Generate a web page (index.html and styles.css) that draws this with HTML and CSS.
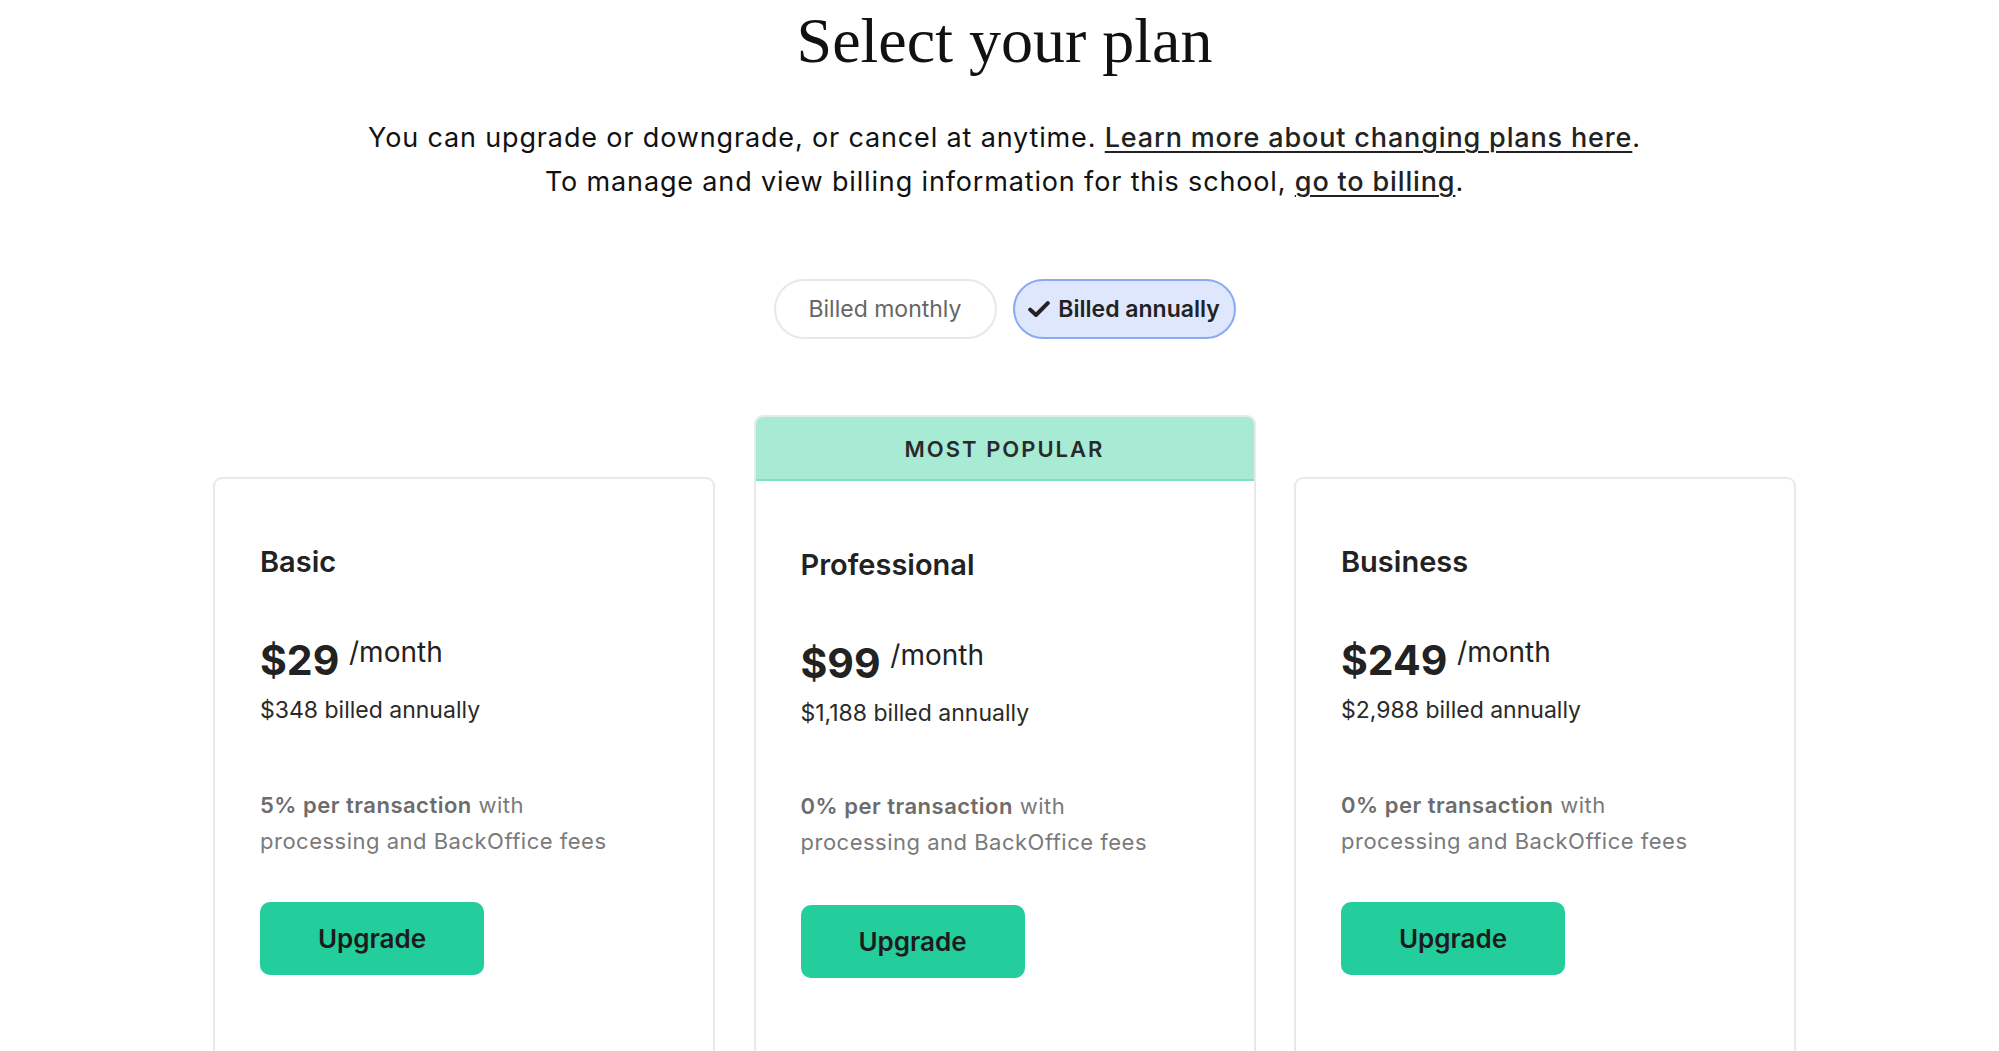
FILE: index.html
```html
<!DOCTYPE html>
<html lang="en">
<head>
<meta charset="utf-8">
<title>Select your plan</title>
<link rel="stylesheet" href="styles.css">
</head>
<body>
<main class="page">
  <h1 class="title">Select your plan</h1>
  <p class="intro">
    You can upgrade or downgrade, or cancel at anytime. <a href="#" class="link">Learn more about changing plans here</a>.<br>
    To manage and view billing information for this school, <a href="#" class="link">go to billing</a>.
  </p>

  <div class="toggle">
    <button class="pill">Billed monthly</button>
    <button class="pill pill-active">
      <svg class="check" viewBox="0 0 22 16" width="22" height="16" aria-hidden="true"><path d="M2.2 8.6 L8 14 L19.8 2.2" fill="none" stroke="#222" stroke-width="4" stroke-linecap="round" stroke-linejoin="round"/></svg>
      <span>Billed annually</span>
    </button>
  </div>

  <div class="plans">
    <section class="card">
      <div class="card-body">
        <h2 class="plan-name">Basic</h2>
        <div class="price"><span class="amount">$29</span> <span class="per">/month</span></div>
        <div class="billed">$348 billed annually</div>
        <p class="fee"><strong>5% per transaction</strong> with<br>processing and BackOffice fees</p>
        <button class="upgrade">Upgrade</button>
      </div>
    </section>

    <section class="card card-popular">
      <div class="banner">MOST POPULAR</div>
      <div class="card-body">
        <h2 class="plan-name">Professional</h2>
        <div class="price"><span class="amount">$99</span> <span class="per">/month</span></div>
        <div class="billed">$1,188 billed annually</div>
        <p class="fee"><strong>0% per transaction</strong> with<br>processing and BackOffice fees</p>
        <button class="upgrade">Upgrade</button>
      </div>
    </section>

    <section class="card">
      <div class="card-body">
        <h2 class="plan-name">Business</h2>
        <div class="price"><span class="amount">$249</span> <span class="per">/month</span></div>
        <div class="billed">$2,988 billed annually</div>
        <p class="fee"><strong>0% per transaction</strong> with<br>processing and BackOffice fees</p>
        <button class="upgrade">Upgrade</button>
      </div>
    </section>
  </div>
</main>
</body>
</html>
```

FILE: styles.css
```css
* { box-sizing: border-box; }

html, body {
  margin: 0;
  background: #ffffff;
}

body {
  font-family: Inter, "Noto Sans", "Liberation Sans", sans-serif;
  color: #1a1a1a;
  overflow: hidden;
}

.page {
  padding: 3px 0 0 10px;
  display: flex;
  flex-direction: column;
  align-items: center;
}

.title {
  margin: 0;
  font-family: "Liberation Serif", "Times New Roman", serif;
  font-weight: 400;
  font-size: 64px;
  line-height: 76px;
  color: #111;
  text-align: center;
}

.intro {
  margin: 37px 0 0;
  font-size: 27px;
  line-height: 44px;
  color: #111;
  text-align: center;
  letter-spacing: 0.85px;
}

.link {
  color: #222;
  font-weight: 500;
  text-decoration: underline;
  text-decoration-thickness: 2px;
  text-underline-offset: 4px;
}

.toggle {
  margin-top: 75px;
  display: flex;
  gap: 16px;
}

.pill {
  width: 223px;
  height: 60px;
  border-radius: 30px;
  border: 2px solid #e8e8e8;
  background: #fff;
  font-family: inherit;
  font-size: 23px;
  color: #666;
  display: flex;
  align-items: center;
  justify-content: center;
  gap: 8px;
  padding: 0;
}

.pill-active {
  background: #dfe7fd;
  border-color: #8aaaf3;
  color: #222;
  font-weight: 600;
}

.check { display: block; }

.plans {
  margin-top: 76px;
  display: flex;
  align-items: flex-start;
  gap: 38.5px;
}

.card {
  width: 502px;
  min-height: 720px;
  margin-top: 62px;
  border: 2px solid #e9e9e9;
  border-radius: 9px;
  background: #fff;
  overflow: hidden;
}

.card-popular {
  margin-top: 0;
  min-height: 782px;
}

.banner {
  height: 64px;
  background: #a8ebd5;
  border-bottom: 2px solid #80e1c2;
  display: flex;
  align-items: center;
  justify-content: center;
  font-size: 22px;
  font-weight: 600;
  letter-spacing: 2px;
  color: #2a2a2a;
  padding-top: 2px;
}

.card-body {
  padding: 65px 45px 0;
}

.card-popular .card-body {
  padding-top: 66px;
}

.plan-name {
  margin: 0;
  font-size: 29px;
  line-height: 36px;
  font-weight: 600;
  color: #222;
}

.price {
  margin-top: 55px;
  font-size: 41px;
  line-height: 50px;
  font-weight: 700;
  color: #222;
}

.per {
  font-size: 28px;
  line-height: 1;
  font-weight: 400;
  vertical-align: 13px;
}

.billed {
  margin-top: 10px;
  font-size: 23px;
  line-height: 30px;
  color: #2a2a2a;
}

.fee {
  margin: 62px 0 0;
  font-size: 22px;
  line-height: 36px;
  color: #7a7a7a;
  letter-spacing: 0.5px;
}

.card-popular .fee {
  margin-top: 60px;
}

.card-popular .upgrade {
  margin-top: 45px;
}

.fee strong {
  font-weight: 600;
  color: #6c6c6c;
}

.upgrade {
  margin-top: 43px;
  width: 224px;
  height: 73px;
  border: none;
  border-radius: 10px;
  background: #24cd9c;
  font-family: inherit;
  font-size: 26px;
  font-weight: 600;
  color: #1c1c1c;
  padding: 0;
}
```
